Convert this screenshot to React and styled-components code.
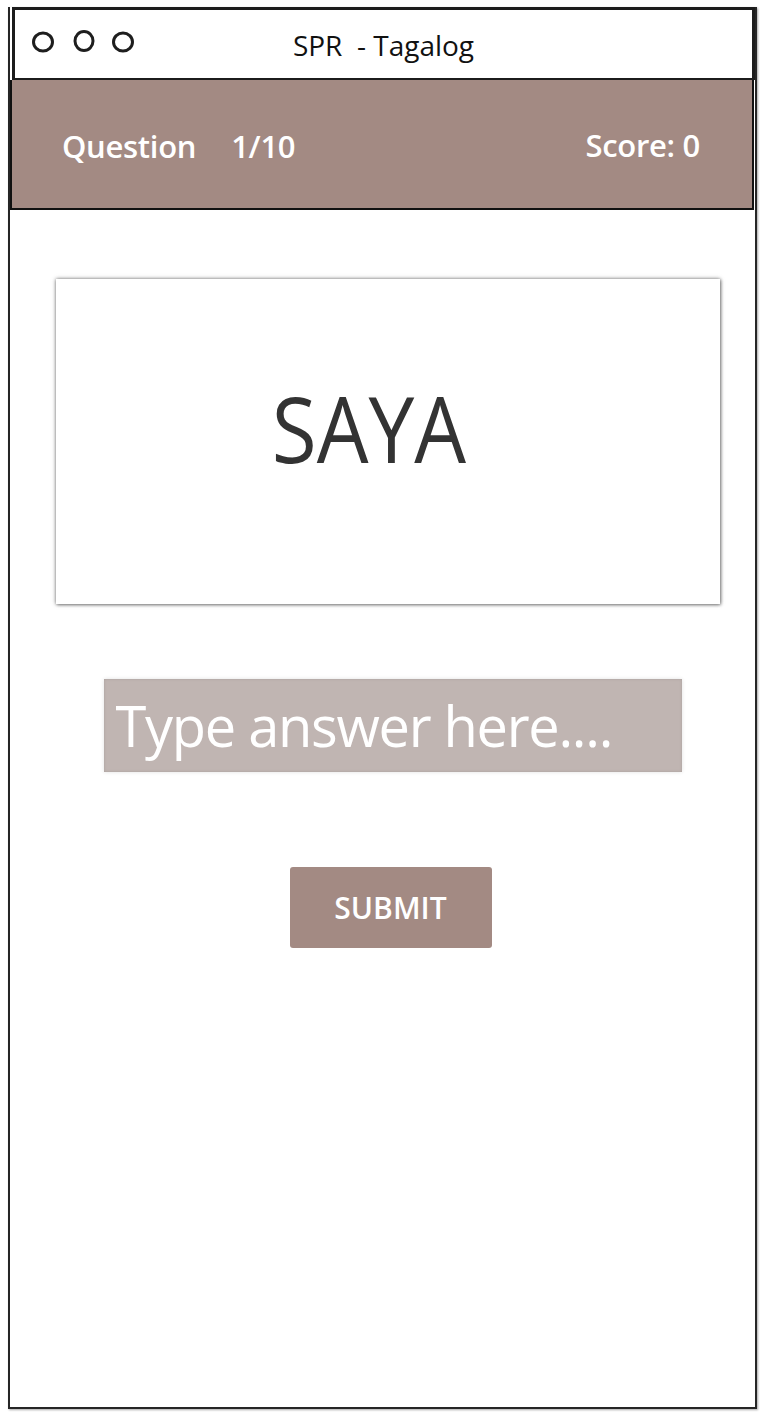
import React from 'react';
import styled, { createGlobalStyle } from 'styled-components';

const GlobalStyle = createGlobalStyle`
	html, body {
		margin: 0;
		padding: 0;
		background: #fff;
	}
	body {
		font-family: 'Open Sans', 'Noto Sans', sans-serif;
	}
`;

const Page = styled.div`
	width: 770px;
	height: 1418px;
	padding: 7px 13px 9px 8px;
	box-sizing: border-box;
`;

const Frame = styled.div`
	height: 100%;
	border: 2px solid #262626;
	border-top: none;
	box-sizing: border-box;
	display: flex;
	flex-direction: column;
	box-shadow: 1px 1px 2px rgba(0, 0, 0, 0.35);
`;

const TitleBar = styled.div`
	position: relative;
	height: 73px;
	margin-left: 2px;
	border: 3px solid #1c1c1c;
	border-bottom-width: 2px;
	box-sizing: border-box;
	display: flex;
	align-items: center;
	justify-content: center;
	font-size: 28px;
	color: #111;
	white-space: pre;
	padding-top: 2px;
`;

const Dots = styled.svg`
	position: absolute;
	left: 9px;
	top: 14px;
`;

const Header = styled.div`
	height: 130px;
	margin-right: 1px;
	background: #a38a83;
	border: 2px solid #111;
	border-top: none;
	box-sizing: border-box;
	display: flex;
	align-items: center;
	justify-content: space-between;
	padding: 0 52px 0 50px;
	color: #fff;
	font-size: 31px;
	font-weight: 600;
	letter-spacing: -0.3px;
`;

const HeaderGroup = styled.div`
	display: flex;
	gap: 35px;
	margin-top: 2px;
`;

const HeaderItem = styled.span`
	white-space: pre;
	margin-top: 2px;
`;

const Content = styled.div`
	display: flex;
	flex-direction: column;
	align-items: center;
	padding-top: 69px;
`;

const Card = styled.div`
	width: 664px;
	height: 325px;
	margin-left: 11px;
	background: #fff;
	box-shadow: 0 0 4px rgba(0, 0, 0, 0.55), 1px 1px 3px rgba(0, 0, 0, 0.3);
	display: flex;
	align-items: center;
	justify-content: center;
	font-size: 91px;
	color: #333;
`;

const CardWord = styled.span`
	display: inline-block;
	transform: translate(-19px, -14px) scaleX(0.9);
`;

const AnswerBox = styled.div`
	width: 578px;
	height: 93px;
	margin-top: 75px;
	margin-left: 20px;
	box-sizing: border-box;
	background: #c0b5b2;
	box-shadow: 0 0 4px rgba(0, 0, 0, 0.12), inset 0 0 3px rgba(0, 0, 0, 0.12);
	display: flex;
	align-items: center;
	padding-left: 12px;
	padding-bottom: 2px;
	color: #fff;
	font-size: 56px;
	letter-spacing: -1.3px;
	white-space: nowrap;
	overflow: hidden;
`;

const SubmitButton = styled.button`
	width: 202px;
	height: 81px;
	margin-top: 95px;
	margin-left: 16px;
	border: none;
	border-radius: 3px;
	background: #a38a83;
	color: #fff;
	font-family: inherit;
	font-size: 30px;
	font-weight: 600;
	padding: 0;
`;

export default function App() {
	return (
		<>
			<GlobalStyle />
			<Page>
				<Frame>
					<TitleBar>
						<Dots width="124" height="34" viewBox="0 0 124 34">
							<ellipse cx="19" cy="18" rx="9.5" ry="9" fill="none" stroke="#1e1e1e" strokeWidth="3" />
							<ellipse cx="60" cy="17" rx="9" ry="9.5" fill="none" stroke="#1e1e1e" strokeWidth="3" />
							<ellipse cx="99" cy="18" rx="9.5" ry="9" fill="none" stroke="#1e1e1e" strokeWidth="3" />
						</Dots>
						SPR  - Tagalog
					</TitleBar>
					<Header>
						<HeaderGroup>
							<HeaderItem>Question</HeaderItem>
							<HeaderItem>1/10</HeaderItem>
						</HeaderGroup>
						<HeaderItem>Score: 0</HeaderItem>
					</Header>
					<Content>
						<Card>
							<CardWord>SAYA</CardWord>
						</Card>
						<AnswerBox>Type answer here....</AnswerBox>
						<SubmitButton>SUBMIT</SubmitButton>
					</Content>
				</Frame>
			</Page>
		</>
	);
}
